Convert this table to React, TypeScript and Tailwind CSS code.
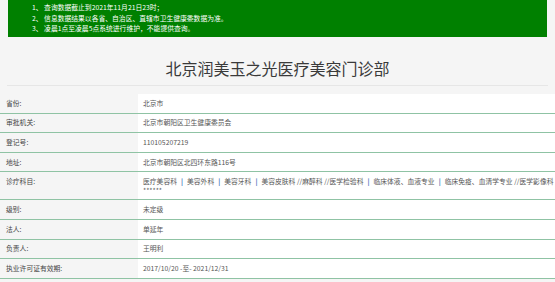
import React from 'react';

interface Row {
  label: string;
  value: React.ReactNode;
  tall?: boolean;
}

const Sep = () => <span className="mx-[4px] font-bold text-[#3b6fb6]">|</span>;

const rows: Row[] = [
  { label: '省份:', value: '北京市' },
  { label: '审批机关:', value: '北京市朝阳区卫生健康委员会' },
  { label: '登记号:', value: '110105207219' },
  { label: '地址:', value: '北京市朝阳区北四环东路116号' },
  {
    label: '诊疗科目:',
    tall: true,
    value: (
      <>
        <span className="block">
          医疗美容科<Sep />美容外科<Sep />美容牙科<Sep />美容皮肤科 //麻醉科 //医学检验科<Sep />临床体液、血液专业<Sep />临床免疫、血清学专业 //医学影像科
        </span>
        <span className="block">******</span>
      </>
    ),
  },
  { label: '级别:', value: '未定级' },
  { label: '法人:', value: '单延年' },
  { label: '负责人:', value: '王明利' },
  { label: '执业许可证有效期:', value: '2017/10/20 -至- 2021/12/31' },
];

export default function App() {
  return (
    <div
      className="w-[555px] h-[282px] overflow-hidden bg-[#f5f5f5]"
      style={{ fontFamily: '"Noto Sans CJK SC", "Noto Sans", sans-serif' }}
    >
      {/* notice banner */}
      <div className="mx-[8px] h-[37px] bg-[#008000] pl-[24px] pt-[2px] text-[6.8px] leading-[10.5px] text-white">
        <p>1、&nbsp;查询数据截止到2021年11月21日23时；</p>
        <p>2、&nbsp;信息数据结果以各省、自治区、直辖市卫生健康委数据为准。</p>
        <p>3、&nbsp;凌晨1点至凌晨5点系统进行维护，不能提供查询。</p>
      </div>

      {/* title */}
      <div className="mx-[7px] h-[49px] border-b border-[#e6e6e6] flex items-center justify-center">
        <h1 className="text-[16px] leading-none text-[#3a3a3a] mt-[13px]">北京润美玉之光医疗美容门诊部</h1>
      </div>

      {/* info table */}
      <div className="mt-[8px]">
        {rows.map((r) =>
          r.tall ? (
            <div key={r.label} className="flex border-b border-[#8fc3a4] text-[6.8px] leading-[9px]">
              <div className="w-[138px] shrink-0 pl-[6px] pt-[4.5px] pb-[4.5px] text-[#444]">{r.label}</div>
              <div className="flex-1 bg-white pl-[5px] py-[4.5px] text-[#555]">{r.value}</div>
            </div>
          ) : (
            <div key={r.label} className="flex border-b border-[#8fc3a4] text-[6.8px] leading-[9px]">
              <div className="w-[138px] shrink-0 pl-[6px] py-[4.8px] text-[#444]">{r.label}</div>
              <div className="flex-1 bg-white pl-[5px] py-[4.8px] text-[#555]">{r.value}</div>
            </div>
          )
        )}
      </div>
    </div>
  );
}
